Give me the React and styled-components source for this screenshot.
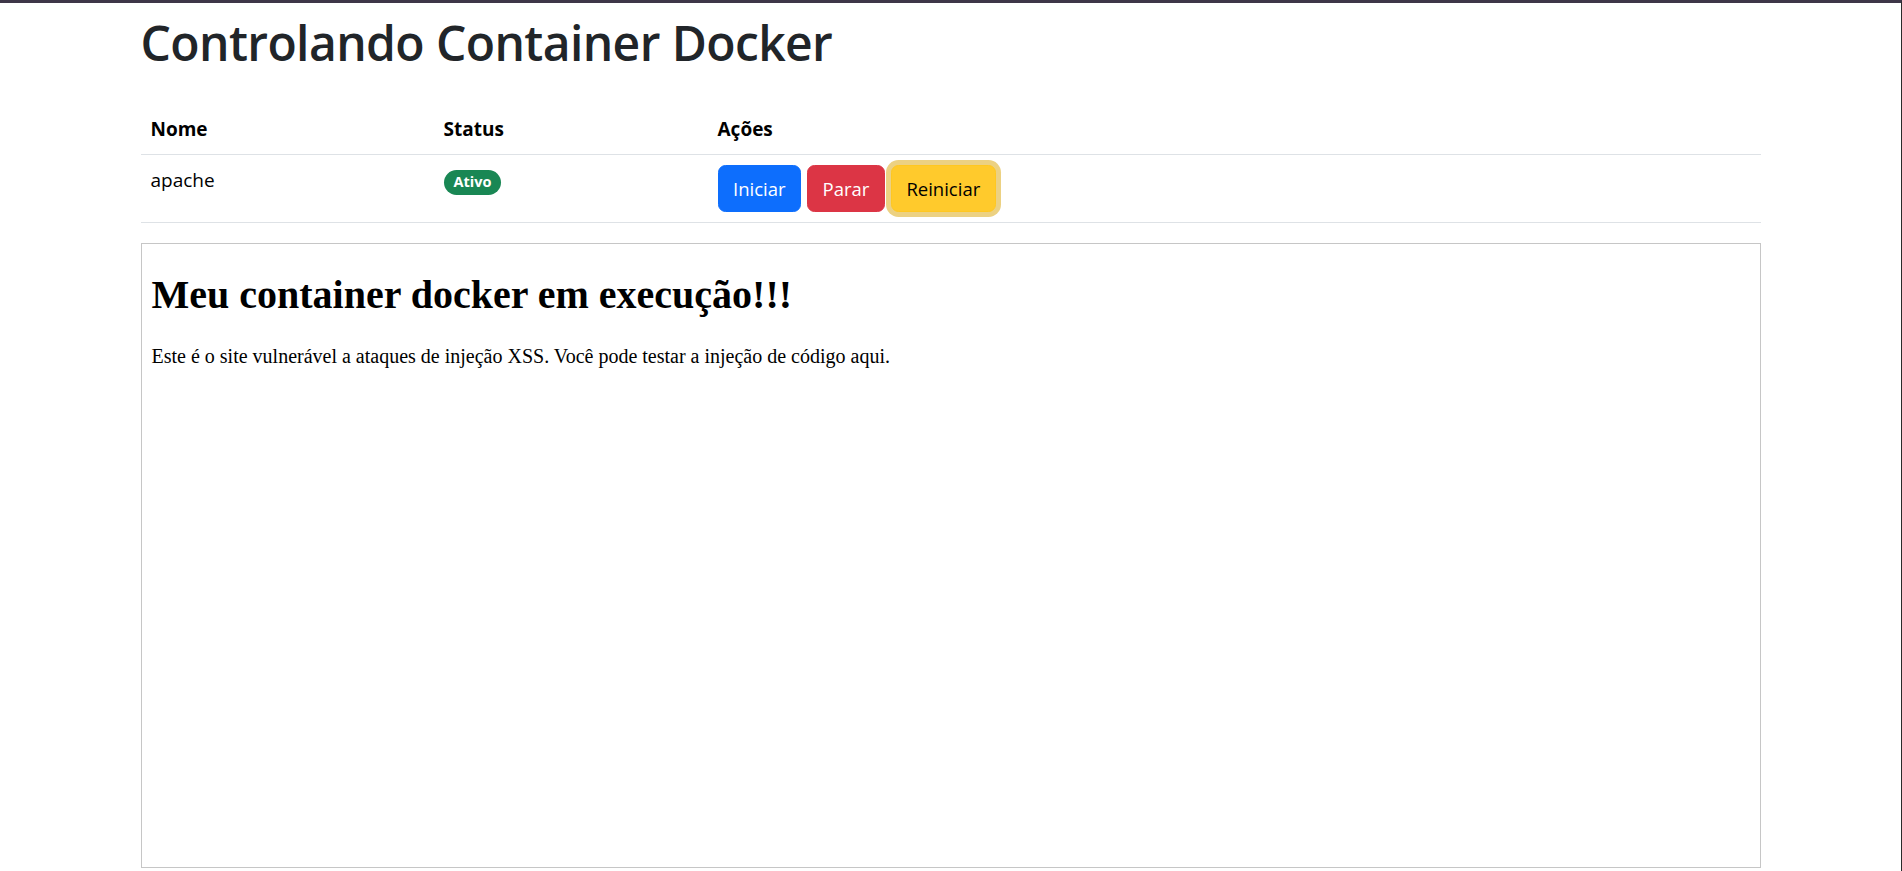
import styled, { createGlobalStyle } from 'styled-components'

const GlobalStyle = createGlobalStyle`
  html, body {
    margin: 0;
    padding: 0;
    background: #fff;
  }
  body {
    box-sizing: border-box;
    min-height: 100vh;
    border-top: 3px solid #3e3648;
    border-right: 1px solid #2b2b2b;
    font-family: "Open Sans", "Noto Sans", sans-serif;
    font-size: 20px;
    color: #212529;
  }
  *, *::before, *::after { box-sizing: border-box; }
`

const Container = styled.div`
  width: 1650px;
  margin: 0 auto;
  padding: 0 15px;
`

const Title = styled.h1`
  margin: 10px 0 0;
  font-size: 48px;
  line-height: 60px;
  font-weight: 600;
  color: #212529;
  letter-spacing: -0.6px;
`

const Table = styled.table`
  width: 100%;
  margin-top: 31px;
  border-collapse: collapse;
  color: #000;
`

const HeadCell = styled.th`
  width: ${p => p.$w || 'auto'};
  padding: 10px;
  text-align: left;
  font-weight: 700;
  font-size: 19px;
  line-height: 30px;
  border-bottom: 1px solid #dee2e6;
`

const Cell = styled.td`
  padding: 10px;
  vertical-align: top;
  font-size: 19px;
  line-height: 30px;
  border-bottom: 1px solid #dee2e6;
`

const Badge = styled.span`
  display: inline-block;
  padding: 5.5px 10px;
  font-size: 14.5px;
  font-weight: 700;
  line-height: 1;
  color: #fff;
  background: #198754;
  border-radius: 50rem;
`

const Actions = styled.div`
  display: flex;
  gap: 6px;
`

const colors = {
  primary: { bg: '#0d6efd', border: '#0d6efd', fg: '#fff' },
  danger: { bg: '#dc3545', border: '#dc3545', fg: '#fff' },
  warning: { bg: '#ffca2c', border: '#ffc720', fg: '#000' },
}

const Button = styled.button`
  font-family: inherit;
  font-size: 18.5px;
  line-height: 30px;
  padding: 7.5px 14.5px;
  border: 1px solid ${p => colors[p.$variant].border};
  border-radius: 7.5px;
  background: ${p => colors[p.$variant].bg};
  color: ${p => colors[p.$variant].fg};
  box-shadow: ${p => (p.$focused ? '0 0 0 5px rgba(217, 164, 6, 0.5)' : 'none')};
  cursor: pointer;
`

const Frame = styled.div`
  margin-top: 20px;
  height: 625px;
  border: 1px solid #c6c6c6;
  padding: 0 10px;
  font-family: "Liberation Serif", "Times New Roman", serif;
  color: #000;
  overflow: hidden;
`

const FrameHeading = styled.h1`
  margin: 27px 0;
  font-size: 40px;
  font-weight: 700;
`

const FrameText = styled.p`
  margin: 0;
  font-size: 20px;
`

export default function App() {
  const containers = [{ name: 'apache', status: 'Ativo' }]

  return (
    <>
      <GlobalStyle />
      <Container>
        <Title>Controlando Container Docker</Title>
        <Table>
          <thead>
            <tr>
              <HeadCell $w="293px">Nome</HeadCell>
              <HeadCell $w="274px">Status</HeadCell>
              <HeadCell>Ações</HeadCell>
            </tr>
          </thead>
          <tbody>
            {containers.map(c => (
              <tr key={c.name}>
                <Cell>{c.name}</Cell>
                <Cell><Badge>{c.status}</Badge></Cell>
                <Cell>
                  <Actions>
                    <Button $variant="primary">Iniciar</Button>
                    <Button $variant="danger">Parar</Button>
                    <Button $variant="warning" $focused>Reiniciar</Button>
                  </Actions>
                </Cell>
              </tr>
            ))}
          </tbody>
        </Table>
        <Frame>
          <FrameHeading>Meu container docker em execução!!!</FrameHeading>
          <FrameText>
            Este é o site vulnerável a ataques de injeção XSS. Você pode testar a injeção de código aqui.
          </FrameText>
        </Frame>
      </Container>
    </>
  )
}
